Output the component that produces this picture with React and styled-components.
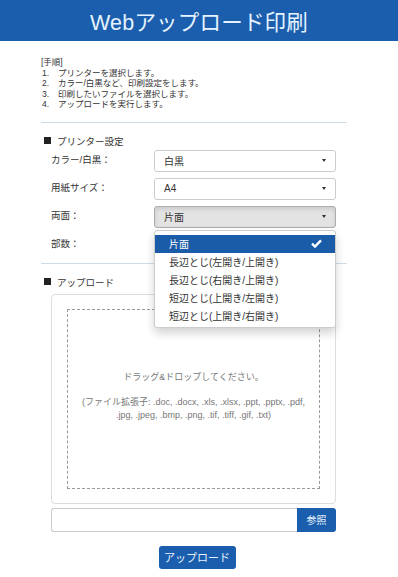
import React from "react";
import styled, { createGlobalStyle } from "styled-components";

const Global = createGlobalStyle`
  * { box-sizing: border-box; }
  body {
    margin: 0;
    background: #ffffff;
    font-family: "Liberation Sans", "Noto Sans CJK JP", sans-serif;
    color: #333333;
  }
`;

const Header = styled.header`
  height: 41px;
  background: #1b5ead;
  display: flex;
  align-items: center;
  justify-content: center;
`;

const Title = styled.h1`
  margin: 0;
  font-size: 21.5px;
  font-weight: 400;
  color: #e4f3ff;
  letter-spacing: 0.2px;
`;

const Main = styled.main`
  margin: 0 51px 0 41px;
`;

const Steps = styled.div`
  padding-top: 16px;
  font-size: 8.5px;
  line-height: 10.5px;
  color: #333;
  padding-bottom: 12px;
  border-bottom: 1px solid #cddceb;
`;

const Step = styled.div`
  display: flex;
  span:first-child {
    width: 17px;
    padding-left: 1px;
  }
`;

const Section = styled.section`
  padding: 11px 11px 7px 3px;
  border-bottom: 1px solid #cddceb;
`;

const Heading = styled.div`
  display: flex;
  align-items: center;
  gap: 6px;
  font-size: 9.5px;
  height: 14px;
  margin-bottom: ${(p) => p.$mb || 2}px;
  &::before {
    content: "";
    width: 7px;
    height: 7px;
    background: #222;
  }
`;

const Rows = styled.div`
  display: grid;
  grid-template-columns: 103px 1fr;
  row-gap: 6px;
  padding-left: 7px;
`;

const Label = styled.div`
  font-size: 9.5px;
  height: 22px;
  display: flex;
  align-items: center;
  padding-bottom: 4px;
  color: #333;
`;

const Cell = styled.div`
  position: relative;
`;

const Select = styled.div`
  height: 22px;
  border: 1px solid ${(p) => (p.$active ? "#adadad" : "#cccccc")};
  border-radius: 3px;
  background: ${(p) => (p.$active ? "#e3e3e3" : "#ffffff")};
  box-shadow: ${(p) => (p.$active ? "inset 0 2px 4px rgba(0,0,0,0.12)" : "none")};
  display: flex;
  align-items: center;
  justify-content: space-between;
  padding: 0 9px 0 9px;
  font-size: 10px;
  color: #333;
  &::after {
    content: "";
    border-top: 3px solid #333;
    border-left: 2.5px solid transparent;
    border-right: 2.5px solid transparent;
  }
`;

const Menu = styled.ul`
  position: absolute;
  top: 24px;
  left: 0;
  right: 0;
  margin: 0;
  padding: 4px 0 2px;
  list-style: none;
  background: #fff;
  border: 1px solid #cccccc;
  border-radius: 3px;
  box-shadow: 0 5px 10px rgba(0, 0, 0, 0.18);
  z-index: 2;
`;

const Item = styled.li`
  height: 18px;
  display: flex;
  align-items: center;
  justify-content: space-between;
  padding: 0 13px 0 14px;
  font-size: 10px;
  background: ${(p) => (p.$selected ? "#1b5ca9" : "transparent")};
  color: ${(p) => (p.$selected ? "#ffffff" : "#333333")};
`;

const Panel = styled.div`
  margin: 0 0 0 7px;
  border: 1px solid #dddddd;
  border-radius: 4px;
  padding: 14px 15px;
`;

const Drop = styled.div`
  height: 180px;
  border: 1px dashed #999999;
  display: flex;
  flex-direction: column;
  align-items: center;
  justify-content: center;
  text-align: center;
  color: #777777;
  padding-bottom: 6px;
`;

const DropMain = styled.div`
  font-size: 9px;
  margin-bottom: 13px;
`;

const DropExt = styled.div`
  font-size: 9px;
  line-height: 13px;
`;

const FileRow = styled.div`
  display: flex;
  margin: 4px 0 0 7px;
  height: 24px;
`;

const FileInput = styled.div`
  flex: 1;
  border: 1px solid #cccccc;
  border-right: none;
  border-radius: 3px 0 0 3px;
`;

const Button = styled.button`
  border: none;
  background: #1b5ead;
  color: #e8f3ff;
  font-family: inherit;
  font-size: ${(p) => p.$size || 10}px;
  border-radius: ${(p) => p.$radius || "3px"};
  width: ${(p) => p.$w}px;
  height: ${(p) => p.$h}px;
  padding: 0;
`;

const Actions = styled.div`
  display: flex;
  justify-content: center;
  padding: 14px 4px 8px 10px;
  margin: 0 -11px 0 -3px;
  border-bottom: 1px solid #cddceb;
`;

const Check = () => (
  <svg width="11" height="9" viewBox="0 0 11 9">
    <path d="M1 4.6 L4 7.5 L10 1.4" fill="none" stroke="#fff" strokeWidth="2.4" />
  </svg>
);

const steps = [
  "プリンターを選択します。",
  "カラー/白黒など、印刷設定をします。",
  "印刷したいファイルを選択します。",
  "アップロードを実行します。",
];

const options = [
  "片面",
  "長辺とじ(左開き/上開き)",
  "長辺とじ(右開き/上開き)",
  "短辺とじ(上開き/左開き)",
  "短辺とじ(上開き/右開き)",
];

export default function App() {
  return (
    <>
      <Global />
      <Header>
        <Title>Webアップロード印刷</Title>
      </Header>
      <Main>
        <Steps>
          <div>[手順]</div>
          {steps.map((s, i) => (
            <Step key={i}>
              <span>{i + 1}.</span>
              <span>{s}</span>
            </Step>
          ))}
        </Steps>

        <Section>
          <Heading>プリンター設定</Heading>
          <Rows>
            <Label>カラー/白黒：</Label>
            <Cell>
              <Select>白黒</Select>
            </Cell>
            <Label>用紙サイズ：</Label>
            <Cell>
              <Select>A4</Select>
            </Cell>
            <Label>両面：</Label>
            <Cell>
              <Select $active>片面</Select>
              <Menu>
                {options.map((o, i) => (
                  <Item key={o} $selected={i === 0}>
                    {o}
                    {i === 0 && <Check />}
                  </Item>
                ))}
              </Menu>
            </Cell>
            <Label>部数：</Label>
            <Cell>
              <Select>1</Select>
            </Cell>
          </Rows>
        </Section>

        <Section style={{ borderBottom: "none", paddingBottom: 0 }}>
          <Heading $mb={5}>アップロード</Heading>
          <Panel>
            <Drop>
              <DropMain>ドラッグ&ドロップしてください。</DropMain>
              <DropExt>
                (ファイル拡張子: .doc, .docx, .xls, .xlsx, .ppt, .pptx, .pdf,
                <br />
                .jpg, .jpeg, .bmp, .png, .tif, .tiff, .gif, .txt)
              </DropExt>
            </Drop>
          </Panel>
          <FileRow>
            <FileInput />
            <Button $w={39} $h={24} $radius="0 3px 3px 0">
              参照
            </Button>
          </FileRow>
          <Actions>
            <Button $w={77} $h={23} $size={11}>
              アップロード
            </Button>
          </Actions>
        </Section>
      </Main>
    </>
  );
}
